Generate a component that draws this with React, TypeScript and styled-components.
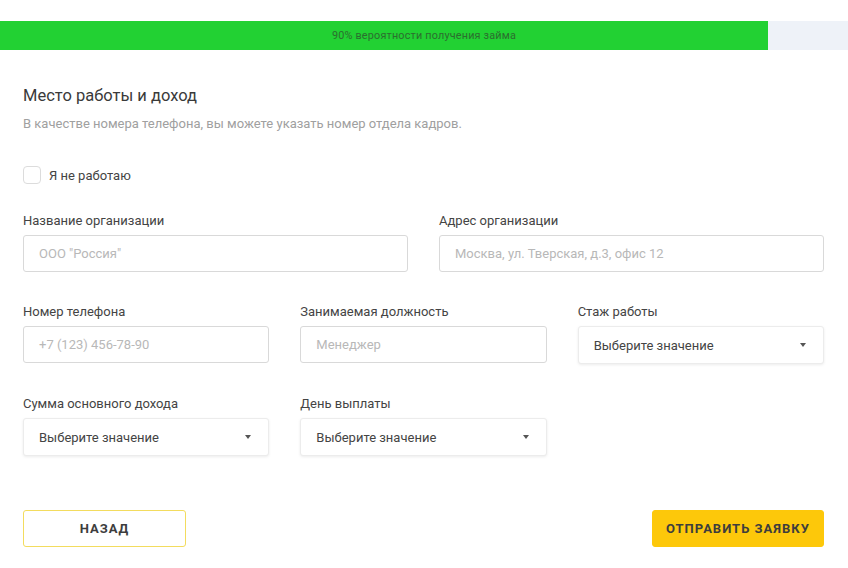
import React from "react";
import styled, { createGlobalStyle } from "styled-components";

const Global = createGlobalStyle`
  html, body { margin: 0; padding: 0; background: #fff; }
  body { font-family: Roboto, "Noto Sans", "Liberation Sans", sans-serif; color: #333; }
  * { box-sizing: border-box; }
`;

const Page = styled.div`
  width: 848px;
  min-height: 568px;
  padding-top: 21px;
  background: #fff;
`;

const Progress = styled.div`
  display: grid;
  height: 29px;
  background: #eef2f8;
`;

const ProgressFill = styled.div`
  grid-area: 1 / 1;
  justify-self: start;
  height: 100%;
  background: #22d133;
`;

const ProgressText = styled.div`
  grid-area: 1 / 1;
  align-self: center;
  justify-self: center;
  font-size: 10.8px;
  color: #2c6e2f;
  letter-spacing: 0.2px;
`;

const Content = styled.div`
  padding: 36px 24px 0 23px;
`;

const Title = styled.h2`
  margin: 0;
  font-size: 16.5px;
  line-height: 20px;
  font-weight: 400;
  color: #3a3a3a;
`;

const Subtitle = styled.p`
  margin: 10px 0 0;
  font-size: 13px;
  line-height: 16px;
  color: #a0a0a0;
`;

const CheckRow = styled.label`
  display: flex;
  align-items: center;
  gap: 8px;
  margin-top: 34px;
  font-size: 13px;
  color: #444;
`;

const CheckBox = styled.span`
  width: 18px;
  height: 18px;
  border: 1px solid #dcdcdc;
  border-radius: 4px;
  background: #fff;
`;

const Grid = styled.div<{ $cols: number; $top: number }>`
  display: grid;
  grid-template-columns: repeat(${(p) => p.$cols}, 1fr);
  column-gap: 31px;
  margin-top: ${(p) => p.$top}px;
`;

const Field = styled.div`
  display: flex;
  flex-direction: column;
`;

const Label = styled.div`
  font-size: 13px;
  line-height: 16px;
  color: #444;
  margin-bottom: 6px;
`;

const Input = styled.div`
  height: 37px;
  border: 1px solid #d9d9d9;
  border-radius: 3px;
  display: flex;
  align-items: center;
  padding: 0 15px;
  font-size: 13px;
  color: #b8b8b8;
  background: #fff;
`;

const Select = styled.div`
  height: 38px;
  border: 1px solid #ececec;
  border-radius: 3px;
  box-shadow: 0 1px 3px rgba(0, 0, 0, 0.08);
  display: flex;
  align-items: center;
  justify-content: space-between;
  padding: 0 15px;
  font-size: 13px;
  color: #444;
  background: #fff;
`;

const Caret = styled.span`
  width: 0;
  height: 0;
  border-left: 3.5px solid transparent;
  border-right: 3.5px solid transparent;
  border-top: 4px solid #555;
  margin-right: 2px;
`;

const Actions = styled.div`
  display: flex;
  justify-content: space-between;
  margin-top: 54px;
`;

const Button = styled.button<{ $primary?: boolean }>`
  height: 37px;
  width: ${(p) => (p.$primary ? "172px" : "163px")};
  border-radius: 3px;
  border: 1px solid ${(p) => (p.$primary ? "#fdc80a" : "#f3dc5e")};
  background: ${(p) => (p.$primary ? "#fdc80a" : "#fff")};
  font-family: Roboto, "Liberation Sans", sans-serif;
  font-size: 13px;
  font-weight: 700;
  letter-spacing: 1px;
  color: #3d3d3d;
  padding: 0;
`;

function TextField({ label, placeholder }: { label: string; placeholder: string }) {
  return (
    <Field>
      <Label>{label}</Label>
      <Input>{placeholder}</Input>
    </Field>
  );
}

function SelectField({ label }: { label: string }) {
  return (
    <Field>
      <Label>{label}</Label>
      <Select>
        Выберите значение
        <Caret />
      </Select>
    </Field>
  );
}

export default function App() {
  return (
    <Page>
      <Global />
      <Progress>
        <ProgressFill style={{ width: `${(768 / 848) * 100}%` }} />
        <ProgressText>90% вероятности получения займа</ProgressText>
      </Progress>
      <Content>
        <Title>Место работы и доход</Title>
        <Subtitle>В качестве номера телефона, вы можете указать номер отдела кадров.</Subtitle>
        <CheckRow>
          <CheckBox />
          Я не работаю
        </CheckRow>
        <Grid $cols={2} $top={29}>
          <TextField label="Название организации" placeholder={'ООО "Россия"'} />
          <TextField label="Адрес организации" placeholder="Москва, ул. Тверская, д.3, офис 12" />
        </Grid>
        <Grid $cols={3} $top={32}>
          <TextField label="Номер телефона" placeholder="+7 (123) 456-78-90" />
          <TextField label="Занимаемая должность" placeholder="Менеджер" />
          <SelectField label="Стаж работы" />
        </Grid>
        <Grid $cols={3} $top={32}>
          <SelectField label="Сумма основного дохода" />
          <SelectField label="День выплаты" />
        </Grid>
        <Actions>
          <Button>НАЗАД</Button>
          <Button $primary>ОТПРАВИТЬ ЗАЯВКУ</Button>
        </Actions>
      </Content>
    </Page>
  );
}
